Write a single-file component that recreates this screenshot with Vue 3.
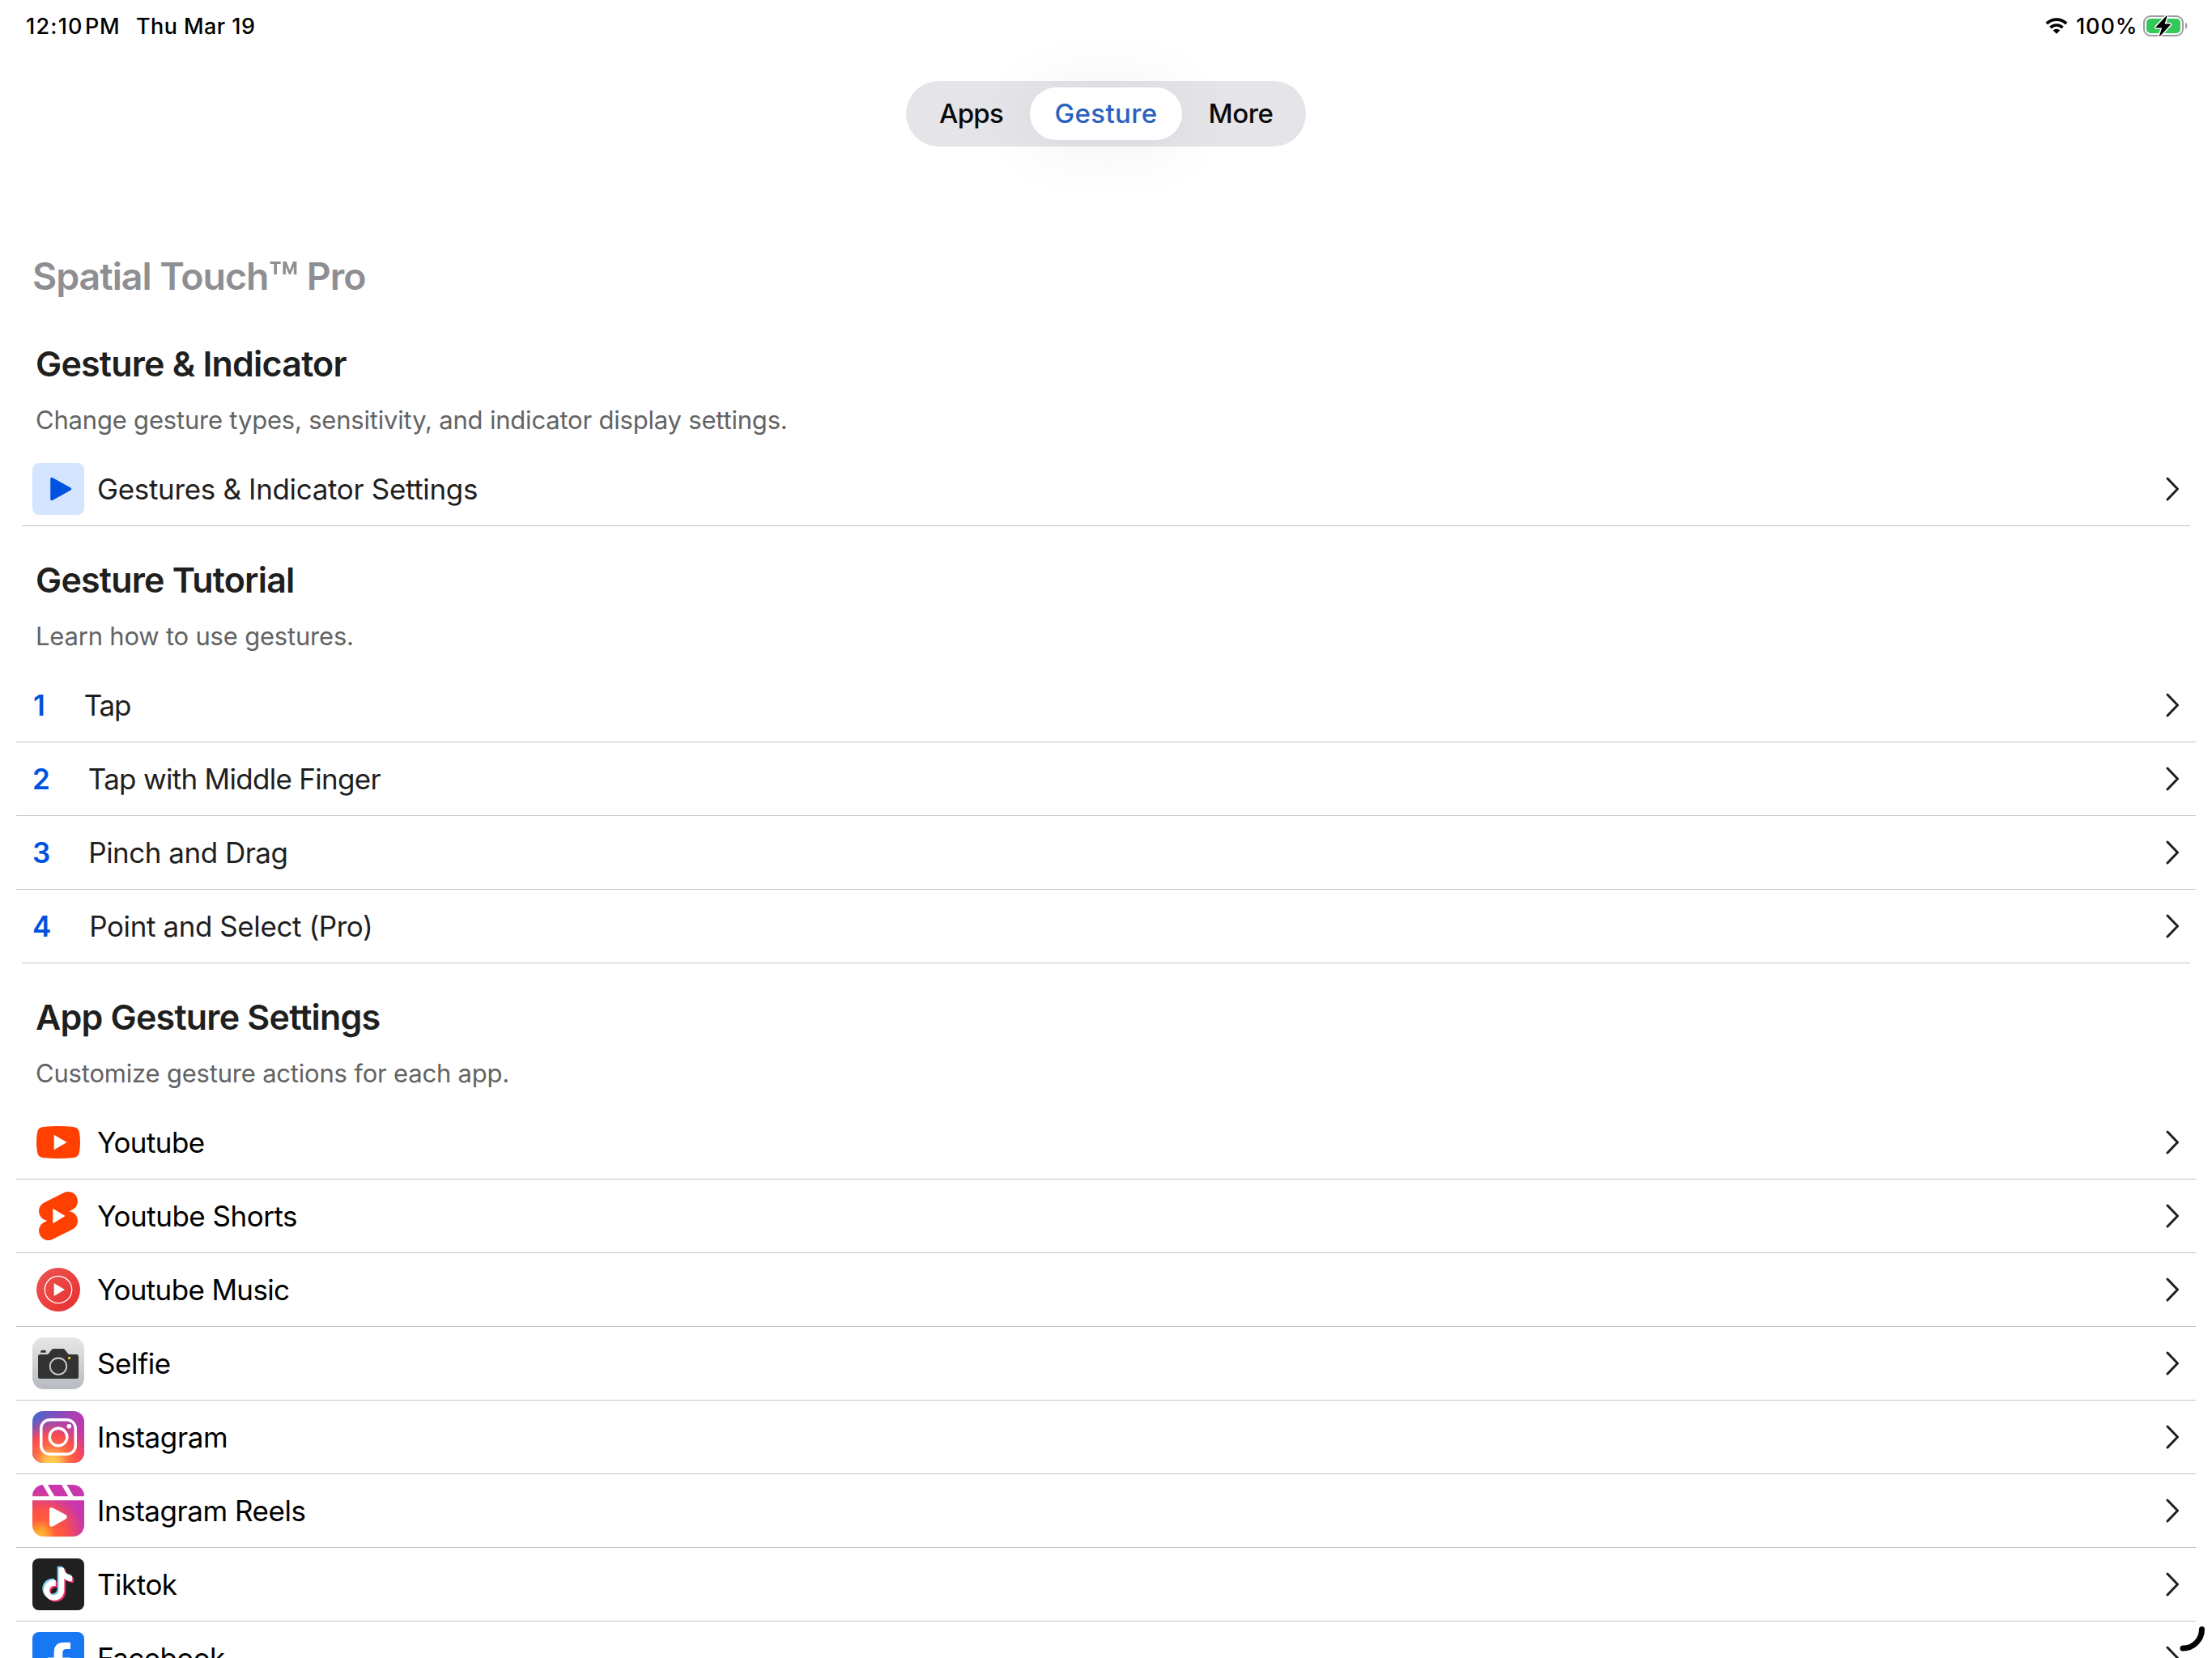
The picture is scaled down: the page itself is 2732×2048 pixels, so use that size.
<template>
  <div class="screen">
    <header class="status-bar">
      <div class="status-left">
        <span class="clock">12:10</span>
        <span class="meridiem">PM</span>
        <span class="date">Thu Mar 19</span>
      </div>
      <div class="status-right">
        <svg class="wifi" viewBox="0 0 28 20">
          <path d="M1.8 7.2a17.3 17.3 0 0 1 24.4 0" fill="none" stroke="#000" stroke-width="3.9" />
          <path d="M6.5 12.1a10.6 10.6 0 0 1 15 0" fill="none" stroke="#000" stroke-width="3.7" />
          <path d="M14 19.8l-4.4-4.3a6.2 6.2 0 0 1 8.800 0z" />
        </svg>
        <span class="percent">100%</span>
        <svg class="battery" viewBox="0 0 56 28">
          <rect x="1" y="2" width="48" height="24" rx="8" fill="none" stroke="#9c9c9e" stroke-width="2" />
          <path d="M52 9.8c3 .9 3 7.500 0 8.400z" fill="#9c9c9e" />
          <rect x="4" y="5" width="42" height="18" rx="5" fill="#34c759" />
          <path d="M28.6 1.5 15.8 15.2q-.6 1 .5 1.2h6.9l-3.2 9.4q-.1 1.3 1 .6L33.6 12.8q.6-1-.5-1.2h-6.6l3.1-9.4q.1-1.4-1-.7z" stroke="#fff" stroke-width="3" paint-order="stroke" />
        </svg>
      </div>
    </header>

    <nav class="tabs">
      <button v-for="tab in tabs" :key="tab" type="button" :class="['tab', tab.toLowerCase(), { active: tab === activeTab }]"
        @click="activeTab = tab">
        {{ tab }}
      </button>
    </nav>

    <main>
      <h1>Spatial Touch<span class="tm">™</span> Pro</h1>

      <section v-for="section in sections" :key="section.title">
        <div class="section-head">
          <h2>{{ section.title }}</h2>
          <p>{{ section.text }}</p>
        </div>
        <ul>
          <li v-for="(item, i) in section.items" :key="item.name" :class="{ app: section.apps }">
            <span v-if="section.numbered" class="number">{{ i + 1 }}</span>

            <svg v-else-if="item.icon === 'play'" class="icon" viewBox="0 0 64 64">
              <rect width="64" height="64" rx="8" fill="#d6e5ff" />
              <path d="M24 19.5v25L46.5 32z" fill="#0053e0" stroke="#0053e0" stroke-width="3.5" stroke-linejoin="round" />
            </svg>

            <svg v-else-if="item.icon === 'youtube'" class="icon" viewBox="0 0 64 64">
              <path d="M13 13q19-2 38 0 6 .6 7 7 2 12 0 24-1 6.4-7 7-19 2-38 0-6-.6-7-7-2-12 0-24 1-6.4 7-7z" fill="#ff4000" />
              <path d="M26.7 22.7v18.6L42.7 32z" fill="#fff" />
            </svg>

            <svg v-else-if="item.icon === 'shorts'" class="icon" viewBox="0 0 64 64">
              <path d="M19.8 26 44.2 13.7M19.8 50.3 44.2 38" stroke="#ff4000" stroke-width="23.5" stroke-linecap="round" fill="none" />
              <path d="M25.3 22.7v18.6L40.5 32z" fill="#fff" />
            </svg>

            <svg v-else-if="item.icon === 'music'" class="icon" viewBox="0 0 64 64">
              <defs>
                <linearGradient id="musicBg" x1="0" y1="0" x2="1" y2="1">
                  <stop offset="0" stop-color="#ec5552" />
                  <stop offset="1" stop-color="#e72e2f" />
                </linearGradient>
              </defs>
              <circle cx="32" cy="32" r="27" fill="url(#musicBg)" />
              <circle cx="32" cy="32" r="16.7" fill="none" stroke="#fff" stroke-width="1.3" />
              <path d="M26.7 24v16L40 32z" fill="#fff" />
            </svg>

            <svg v-else-if="item.icon === 'camera'" class="icon" viewBox="0 0 64 64">
              <defs>
                <linearGradient id="cameraBg" x1="0" y1="0" x2="0" y2="1">
                  <stop offset="0" stop-color="#e7e7e7" />
                  <stop offset="1" stop-color="#b6bac0" />
                </linearGradient>
              </defs>
              <rect width="64" height="64" rx="14" fill="url(#cameraBg)" />
              <path d="M10 18.8v-1q0-2 2.500-2h2q2.500 0 2.500 2v1z" fill="#333" />
              <path d="M9.5 21H18q1.500 0 2.500-1.500l3-4q1-1.500 2.500-1.500h12q1.500 0 2.500 1.500l3 4Q44.500 21 46 21h8.500q2.500 0 2.500 2.500v25q0 2.500-2.500 2.500h-45Q7 51 7 48.500v-25Q7 21 9.500 21z" fill="#333" />
              <circle cx="32" cy="35.7" r="10.2" fill="none" stroke="#cdcfd1" stroke-width="1.8" />
              <rect x="44" y="24" width="3" height="3" rx="1" fill="#ffd426" />
            </svg>

            <svg v-else-if="item.icon === 'instagram'" class="icon" viewBox="0 0 64 64">
              <defs>
                <linearGradient id="instaBase" x1="0" y1="0" x2="1" y2=".3">
                  <stop offset="0" stop-color="#3f6bd0" />
                  <stop offset=".5" stop-color="#8a4bbb" />
                  <stop offset="1" stop-color="#c636ad" />
                </linearGradient>
                <radialGradient id="instaGlow" gradientUnits="userSpaceOnUse" cx="24" cy="64" r="58">
                  <stop offset="0" stop-color="#ffd54f" />
                  <stop offset=".14" stop-color="#ffc04e" />
                  <stop offset=".38" stop-color="#ff6a45" />
                  <stop offset=".6" stop-color="#fb4a4f" />
                  <stop offset="1" stop-color="#d33c9a" stop-opacity="0" />
                </radialGradient>
              </defs>
              <rect width="64" height="64" rx="13" fill="url(#instaBase)" />
              <rect width="64" height="64" rx="13" fill="url(#instaGlow)" />
              <g fill="none" stroke="#fff" stroke-width="3.5">
                <rect x="10.8" y="10.8" width="42.4" height="42.4" rx="10.5" />
                <circle cx="32" cy="32" r="10.8" />
              </g>
              <circle cx="45.3" cy="18.7" r="2.8" fill="#fff" />
            </svg>

            <svg v-else-if="item.icon === 'reels'" class="icon" viewBox="0 0 64 64">
              <defs>
                <radialGradient id="reelsBg" gradientUnits="userSpaceOnUse" cx="10" cy="62" r="62">
                  <stop offset="0" stop-color="#ffb73a" />
                  <stop offset=".12" stop-color="#ffa02a" />
                  <stop offset=".3" stop-color="#ff5d3c" />
                  <stop offset=".5" stop-color="#fd5147" />
                  <stop offset=".88" stop-color="#c837ab" />
                </radialGradient>
                <clipPath id="reelsClip"><rect width="64" height="64" rx="14" /></clipPath>
              </defs>
              <g clip-path="url(#reelsClip)">
                <rect width="64" height="64" fill="url(#reelsBg)" />
                <path d="M0 14.3h21L12.7 0H19l8.3 14.3h17L36 0h6.500l8.300 14.300H64v5H0z" fill="#fff" />
              </g>
              <path d="M21 31.5q0-5 4.500-2.800l15.500 8.300q3.500 2.700 0 5.400l-15.500 8.900q-4.500 2-4.500-3z" fill="#fff" />
            </svg>

            <svg v-else-if="item.icon === 'tiktok'" class="icon" viewBox="0 0 64 64">
              <rect width="64" height="64" rx="8" fill="#202020" />
              <path v-for="layer in noteLayers" :key="layer.fill" :d="notePath" :fill="layer.fill" :transform="layer.transform" />
            </svg>

            <svg v-else class="icon" viewBox="0 0 64 64">
              <rect width="64" height="64" rx="8" fill="#1877f2" />
              <path d="M26.7 64V40.5H19v-9h7.700V25q0-12.300 12.300-12.300h8V21h-5.200Q37.300 21 37.300 25.500v6h9.300l-1.500 9h-7.800V64z" fill="#fff" />
            </svg>

            <span class="label" :style="{ letterSpacing: item.tracking + 'px' }">{{ item.name }}</span>
            <svg class="chevron" viewBox="0 0 17 30">
              <path d="M2 2l12.5 13L2 28" fill="none" stroke="#1f1f1f" stroke-width="3" stroke-linecap="round" stroke-linejoin="round" />
            </svg>
          </li>
        </ul>
      </section>
    </main>

    <svg class="corner" viewBox="0 0 32 32">
      <path d="M27.5 4.500a23.500 23.500 0 0 1-23.500 23.500" fill="none" stroke="#000" stroke-width="7" stroke-linecap="round" />
    </svg>
  </div>
</template>

<script setup>
import { ref } from 'vue';

const tabs = ['Apps', 'Gesture', 'More'];
const activeTab = ref('Gesture');

const sections = [
  {
    title: 'Gesture & Indicator',
    text: 'Change gesture types, sensitivity, and indicator display settings.',
    items: [{ name: 'Gestures & Indicator Settings', icon: 'play', tracking: -0.34 }]
  },
  {
    title: 'Gesture Tutorial',
    text: 'Learn how to use gestures.',
    numbered: true,
    items: [
      { name: 'Tap', tracking: -1.3 },
      { name: 'Tap with Middle Finger', tracking: -0.7 },
      { name: 'Pinch and Drag', tracking: -0.5 },
      { name: 'Point and Select (Pro)', tracking: -0.42 }
    ]
  },
  {
    title: 'App Gesture Settings',
    text: 'Customize gesture actions for each app.',
    apps: true,
    items: [
      { name: 'Youtube', icon: 'youtube', tracking: -0.6 },
      { name: 'Youtube Shorts', icon: 'shorts', tracking: -0.5 },
      { name: 'Youtube Music', icon: 'music', tracking: -0.65 },
      { name: 'Selfie', icon: 'camera', tracking: -0.4 },
      { name: 'Instagram', icon: 'instagram', tracking: -0.4 },
      { name: 'Instagram Reels', icon: 'reels', tracking: -0.46 },
      { name: 'Tiktok', icon: 'tiktok', tracking: -0.5 },
      { name: 'Facebook', icon: 'facebook', tracking: -0.6 }
    ]
  }
];

const notePath = 'M12.525.02c1.31-.02 2.61-.01 3.91-.02.08 1.53.63 3.09 1.75 4.17 1.12 1.11 2.7 1.62 4.24 1.79v4.03c-1.44-.05-2.89-.35-4.2-.97-.57-.26-1.1-.59-1.62-.93-.01 2.92.01 5.84-.02 8.75-.08 1.4-.54 2.79-1.35 3.94-1.31 1.92-3.58 3.17-5.91 3.21-1.43.08-2.86-.31-4.08-1.03-2.02-1.19-3.44-3.37-3.65-5.71-.02-.5-.03-1-.01-1.49.18-1.9 1.12-3.72 2.58-4.96 1.66-1.44 3.98-2.13 6.15-1.72.02 1.48-.04 2.96-.04 4.44-.99-.32-2.15-.23-3.02.37-.63.41-1.11 1.04-1.36 1.75-.21.51-.15 1.07-.14 1.61.24 1.64 1.82 3.02 3.5 2.87 1.12-.01 2.19-.66 2.77-1.61.19-.33.4-.67.41-1.06.1-1.79.06-3.57.07-5.36.01-4.03-.01-8.05.02-12.07z';

const noteLayers = [
  { fill: '#7fd0f2', transform: 'translate(9.7 9.7) scale(1.68)' },
  { fill: '#ee3170', transform: 'translate(13.3 13.3) scale(1.68)' },
  { fill: '#fff', transform: 'translate(11.5 11.5) scale(1.68)' }
];
</script>

<style>
body {
  background: #fff;
}
</style>

<style scoped>
.screen {
  position: relative;
  width: 2732px;
  height: 2048px;
  overflow: hidden;
  background: #fff;
  font-family: 'Inter', 'Liberation Sans', sans-serif;
  color: #1f1f1f;
}

.status-bar {
  height: 64px;
  display: flex;
  align-items: center;
  justify-content: space-between;
  padding: 0 30px 0 32px;
  font-size: 27px;
  font-weight: 500;
  color: #000;
}

.status-left,
.status-right {
  display: flex;
  align-items: center;
}

.clock {
  width: 73px;
  letter-spacing: 1.2px;
}

.meridiem {
  width: 63px;
  letter-spacing: 0.6px;
}

.date {
  letter-spacing: 0.43px;
}

.wifi {
  width: 28px;
  height: 20px;
  margin-right: 10px;
}

.percent {
  width: 83px;
  letter-spacing: 0.9px;
}

.battery {
  width: 56px;
  height: 28px;
  margin-right: -1px;
}

.tabs {
  width: 494px;
  height: 81px;
  box-sizing: border-box;
  margin: 36px auto 0;
  padding: 8px;
  display: flex;
  border-radius: 41px;
  background: #e5e4e9;
}

.tab {
  width: 145px;
  padding: 0;
  border: none;
  border-radius: 33px;
  background: transparent;
  color: #0a0a0a;
  font-family: inherit;
  font-size: 33px;
  font-weight: 500;
  line-height: 65px;
  letter-spacing: -0.4px;
}

.tab.apps {
  letter-spacing: -0.8px;
}

.tab.gesture {
  width: 188px;
  letter-spacing: 0.4px;
}

.tab.active {
  background: #fff;
  color: #2a62c0;
  box-shadow: 0 4px 84px rgba(0, 0, 0, 0.07);
}

h1 {
  margin: 132px 0 14px 40px;
  font-size: 46.5px;
  font-weight: 600;
  line-height: 56px;
  letter-spacing: -1.05px;
  color: #8e8e93;
}

.tm {
  font-size: 60px;
  line-height: 0;
  vertical-align: -9px;
}

.section-head {
  padding: 40px 44px 20px;
}

h2 {
  margin: 0 0 24px;
  font-size: 43px;
  font-weight: 600;
  line-height: 52px;
  letter-spacing: -0.8px;
}

p {
  margin: 0;
  font-size: 31px;
  line-height: 40px;
  letter-spacing: -0.2px;
  color: #636363;
}

ul {
  margin: 0 20px;
  padding: 0;
  list-style: none;
}

li {
  height: 90px;
  display: flex;
  align-items: center;
  padding: 0 20px;
  border-bottom: 1px solid #c4c4c6;
}

/* the closing line of a group is inset a little further */
li:last-child {
  margin: 0 7px;
  padding: 0 13px;
}

.app {
  color: #000;
}

.number {
  margin-right: 47px;
  font-size: 35px;
  font-weight: 600;
  color: #0053e0;
}

li:first-child .number {
  margin: 0 48px 0 1px;
}

.icon {
  width: 64px;
  height: 64px;
  margin-right: 16px;
}

.label {
  flex: 1;
  font-size: 35px;
}

.chevron {
  width: 17px;
  height: 30px;
}

.corner {
  position: absolute;
  left: 2692px;
  top: 2008px;
  width: 32px;
  height: 32px;
}
</style>
